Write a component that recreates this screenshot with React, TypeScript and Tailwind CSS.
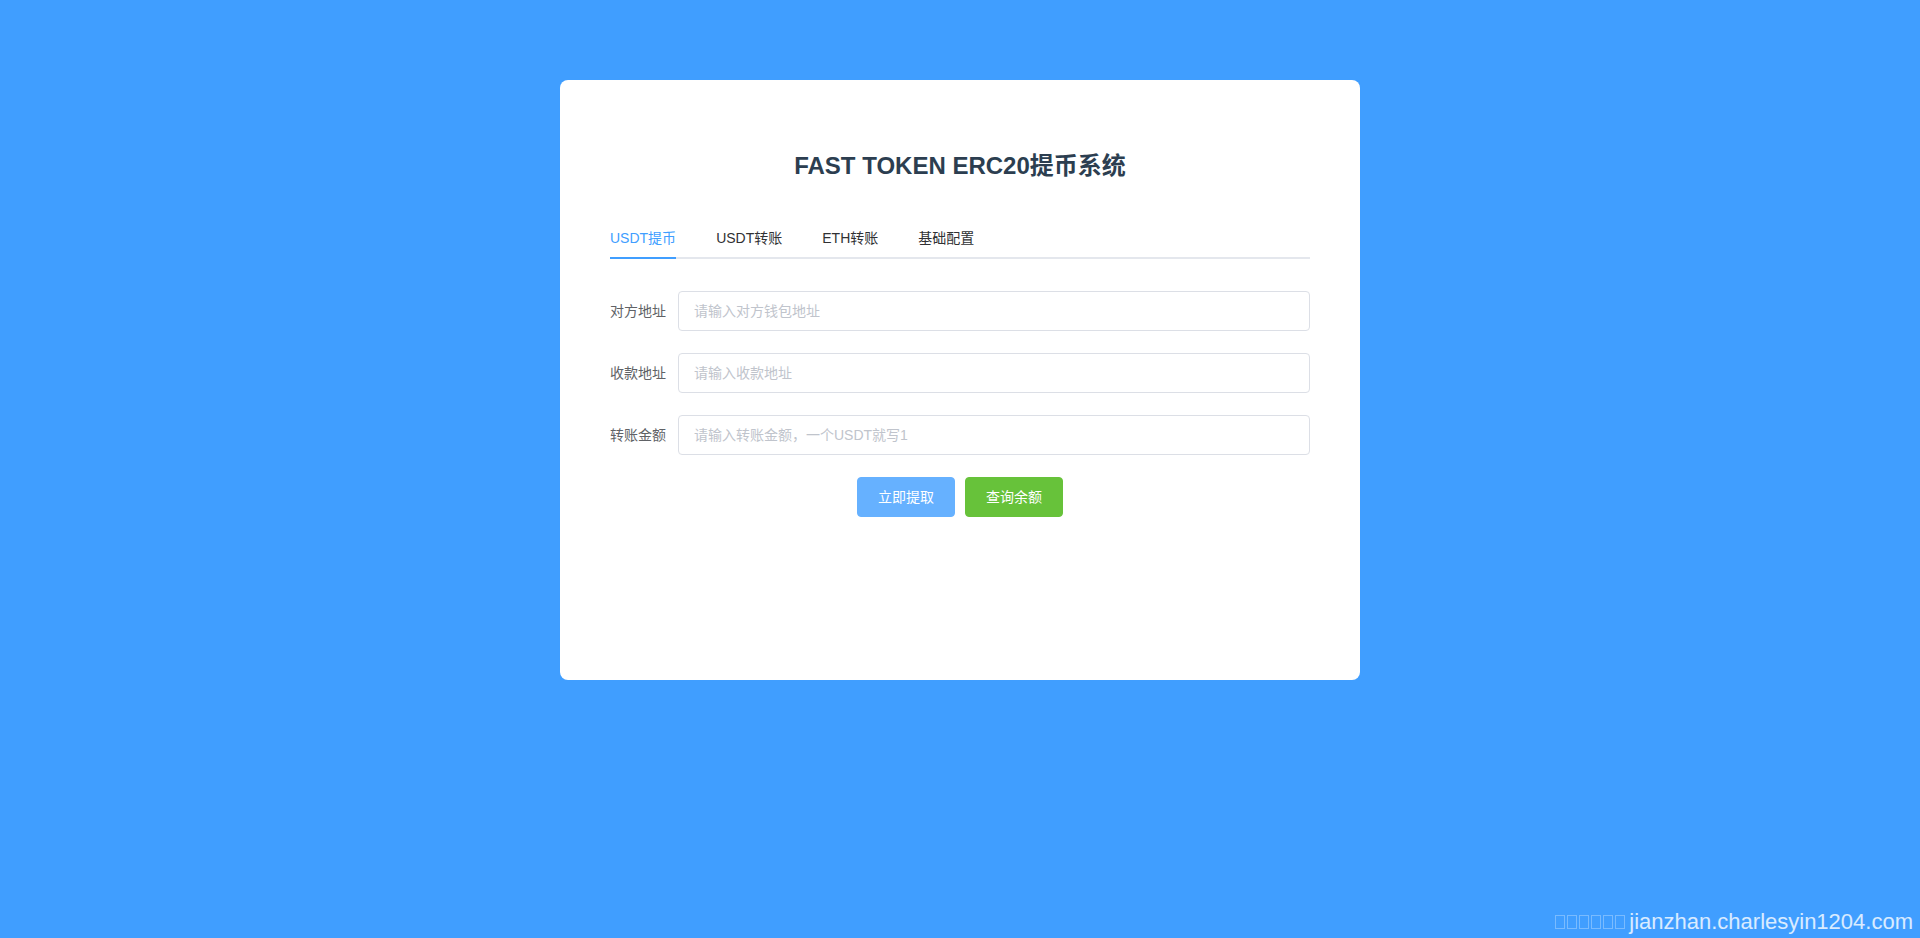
import React, { useState } from 'react';

const tabs = ['USDT提币', 'USDT转账', 'ETH转账', '基础配置'];

const fields = [
  { label: '对方地址', placeholder: '请输入对方钱包地址' },
  { label: '收款地址', placeholder: '请输入收款地址' },
  { label: '转账金额', placeholder: '请输入转账金额，一个USDT就写1' },
];

export default function App() {
  const [active, setActive] = useState(0);

  return (
    <div
      className="flex h-[938px] w-full flex-col items-center bg-[#409eff]"
      style={{ fontFamily: '"Liberation Sans", "Noto Sans CJK SC", sans-serif' }}
    >
      {/* Card */}
      <div className="mt-[80px] flex h-[600px] w-[800px] flex-col rounded-lg bg-white px-[50px] pt-[70px]">
        <h1 className="h-8 text-center text-[24px] font-bold leading-8 text-[#2c3e50]">
          FAST TOKEN ERC20提币系统
        </h1>

        {/* Tabs */}
        <div className="relative mt-9 flex h-[41px] border-b-2 border-[#e4e7ed]">
          {tabs.map((t, i) => (
            <div
              key={t}
              onClick={() => setActive(i)}
              className={
                'relative -mb-[2px] h-[41px] cursor-pointer text-[14px] leading-10 ' +
                (i === 0 ? 'pr-5 ' : 'px-5 ') +
                (i === active ? 'text-[#409eff]' : 'text-[#303133]')
              }
            >
              {t}
              {i === active && (
                <div
                  className={
                    'absolute bottom-0 h-[2px] bg-[#409eff] ' +
                    (i === 0 ? 'left-0 right-5' : 'left-5 right-5')
                  }
                />
              )}
            </div>
          ))}
        </div>

        {/* Form */}
        <div className="mt-[32px] flex flex-col gap-[22px]">
          {fields.map((f) => (
            <div key={f.label} className="flex h-10 items-center">
              <label className="w-[68px] shrink-0 pr-3 text-right text-[14px] text-[#606266]">
                {f.label}
              </label>
              <input
                placeholder={f.placeholder}
                className="h-10 flex-1 rounded border border-[#dcdfe6] bg-white px-[15px] text-[14px] text-[#606266] outline-none placeholder:text-[#c0c4cc] focus:border-[#409eff]"
              />
            </div>
          ))}
          <div className="flex justify-center gap-[10px]">
            <button className="h-10 rounded border border-[#66b1ff] bg-[#66b1ff] px-5 text-[14px] text-white">
              立即提取
            </button>
            <button className="h-10 rounded border border-[#67c23a] bg-[#67c23a] px-5 text-[14px] text-white">
              查询余额
            </button>
          </div>
        </div>
      </div>

      {/* Footer watermark */}
      <div className="flex w-full flex-1 items-end justify-end pb-[2px] pr-[7px]">
        <div className="flex items-center text-[22px] leading-7 text-white/80">
          <span className="mr-[4px] flex gap-[2px]">
            {[0, 1, 2, 3, 4, 5].map((n) => (
              <span key={n} className="inline-block h-[14px] w-[10px] border border-white/30" />
            ))}
          </span>
          jianzhan.charlesyin1204.com
        </div>
      </div>
    </div>
  );
}
